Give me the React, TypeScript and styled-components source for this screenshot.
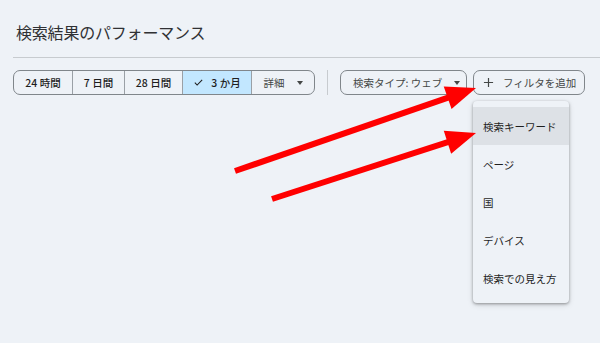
import styled, { createGlobalStyle } from "styled-components";

const GlobalStyle = createGlobalStyle`
  html, body {
    margin: 0;
    padding: 0;
    background: #eef2f7;
  }
  body {
    font-family: "Noto Sans CJK JP", "Noto Sans", sans-serif;
    color: #1f1f1f;
    width: 600px;
    height: 343px;
    overflow: hidden;
    position: relative;
  }
`;

const Page = styled.div`
  width: 600px;
  height: 343px;
  position: relative;
`;

const Header = styled.header`
  margin-left: 13px;
  height: 57px;
  display: flex;
  align-items: center;
  border-bottom: 1px solid #c7cbcf;
`;

const Title = styled.h1`
  margin: 0 0 0 3px;
  padding-top: 6px;
  font-size: 16px;
  font-weight: 400;
  color: #303134;
  letter-spacing: -0.2px;
`;

const Toolbar = styled.div`
  display: flex;
  align-items: center;
  margin-top: 12px;
  padding-left: 13px;
`;

const SegmentGroup = styled.div`
  display: flex;
  height: 25px;
  border: 1px solid #80868b;
  border-radius: 7px;
  overflow: hidden;
  box-sizing: border-box;
`;

const Segment = styled.button<{ $w: number; $active?: boolean; $plain?: boolean }>`
  width: ${(p) => p.$w}px;
  display: flex;
  align-items: center;
  justify-content: center;
  gap: ${(p) => (p.$plain ? 12 : 7)}px;
  border: none;
  border-left: 1px solid #9aa0a6;
  background: ${(p) => (p.$active ? "#c2e7ff" : "transparent")};
  font-family: inherit;
  font-size: 10.5px;
  font-weight: ${(p) => (p.$plain ? 400 : 500)};
  color: ${(p) => (p.$plain ? "#444746" : "#1f1f1f")};
  white-space: nowrap;
  padding: 0;
  &:first-child {
    border-left: none;
  }
`;

const Caret = styled.span`
  flex: none;
  width: 0;
  height: 0;
  border-left: 3.5px solid transparent;
  border-right: 3.5px solid transparent;
  border-top: 4px solid #444746;
`;

const VDivider = styled.div`
  width: 1px;
  height: 25px;
  background: #c7cbcf;
  margin: 0 12px;
`;

const OutlineButton = styled.button<{ $w: number; $pad: number; $gap: number }>`
  width: ${(p) => p.$w}px;
  height: 25px;
  box-sizing: border-box;
  border: 1px solid #80868b;
  border-radius: 7px;
  background: transparent;
  display: flex;
  align-items: center;
  gap: ${(p) => p.$gap}px;
  padding: 0 0 0 ${(p) => p.$pad}px;
  font-family: inherit;
  font-size: 10.5px;
  color: #444746;
  white-space: nowrap;
`;

const FilterWrap = styled.div`
  position: relative;
  margin-left: 6px;
`;

const Menu = styled.ul`
  position: absolute;
  top: 31px;
  left: 0;
  width: 96px;
  margin: 0;
  padding: 6px 0;
  list-style: none;
  background: #eef2f7;
  border-radius: 4px;
  box-shadow: 0 1px 3px rgba(0, 0, 0, 0.35), 0 2px 6px rgba(0, 0, 0, 0.12);
`;

const MenuItem = styled.li<{ $hover?: boolean }>`
  height: 38px;
  display: flex;
  align-items: center;
  padding-left: 10px;
  font-size: 10.5px;
  color: #1f1f1f;
  background: ${(p) => (p.$hover ? "#dde1e6" : "transparent")};
`;

const Overlay = styled.svg`
  position: absolute;
  left: 0;
  top: 0;
  pointer-events: none;
`;

const Check = () => (
  <svg width="11" height="11" viewBox="0 0 24 24" fill="none" stroke="#1f1f1f" strokeWidth="2.4">
    <path d="M4 12.5l5 5L20 6.5" />
  </svg>
);

const Plus = () => (
  <svg width="11" height="11" viewBox="0 0 24 24" fill="none" stroke="#444746" strokeWidth="2.6">
    <path d="M12 2v20M2 12h20" />
  </svg>
);

function Arrow({ x1, y1, x2, y2 }: { x1: number; y1: number; x2: number; y2: number }) {
  const dx = x2 - x1;
  const dy = y2 - y1;
  const len = Math.hypot(dx, dy);
  const ux = dx / len;
  const uy = dy / len;
  const headLen = 30;
  const headW = 12;
  const bx = x2 - ux * headLen;
  const by = y2 - uy * headLen;
  const px = -uy;
  const py = ux;
  const pts = `${x2},${y2} ${bx + px * headW},${by + py * headW} ${bx - px * headW},${by - py * headW}`;
  return (
    <g fill="#ff0000" stroke="#ff0000">
      <line x1={x1} y1={y1} x2={bx + ux * 2} y2={by + uy * 2} strokeWidth="6" />
      <polygon points={pts} strokeWidth="0" />
    </g>
  );
}

const menuItems = ["検索キーワード", "ページ", "国", "デバイス", "検索での見え方"];

export default function App() {
  return (
    <Page>
      <GlobalStyle />
      <Header>
        <Title>検索結果のパフォーマンス</Title>
      </Header>
      <Toolbar>
        <SegmentGroup>
          <Segment $w={58}>24 時間</Segment>
          <Segment $w={52}>7 日間</Segment>
          <Segment $w={58}>28 日間</Segment>
          <Segment $w={69} $active>
            <Check />3 か月
          </Segment>
          <Segment $w={63} $plain>
            詳細 <Caret />
          </Segment>
        </SegmentGroup>
        <VDivider />
        <OutlineButton $w={127} $pad={12} $gap={12}>
          検索タイプ: ウェブ <Caret />
        </OutlineButton>
        <FilterWrap>
          <OutlineButton $w={112} $pad={9} $gap={9}>
            <Plus />
            フィルタを追加
          </OutlineButton>
          <Menu>
            {menuItems.map((m, i) => (
              <MenuItem key={m} $hover={i === 0}>
                {m}
              </MenuItem>
            ))}
          </Menu>
        </FilterWrap>
      </Toolbar>
      <Overlay width="600" height="343" viewBox="0 0 600 343">
        <Arrow x1={235} y1={171} x2={476} y2={88} />
        <Arrow x1={272} y1={199} x2={476} y2={133} />
      </Overlay>
    </Page>
  );
}
